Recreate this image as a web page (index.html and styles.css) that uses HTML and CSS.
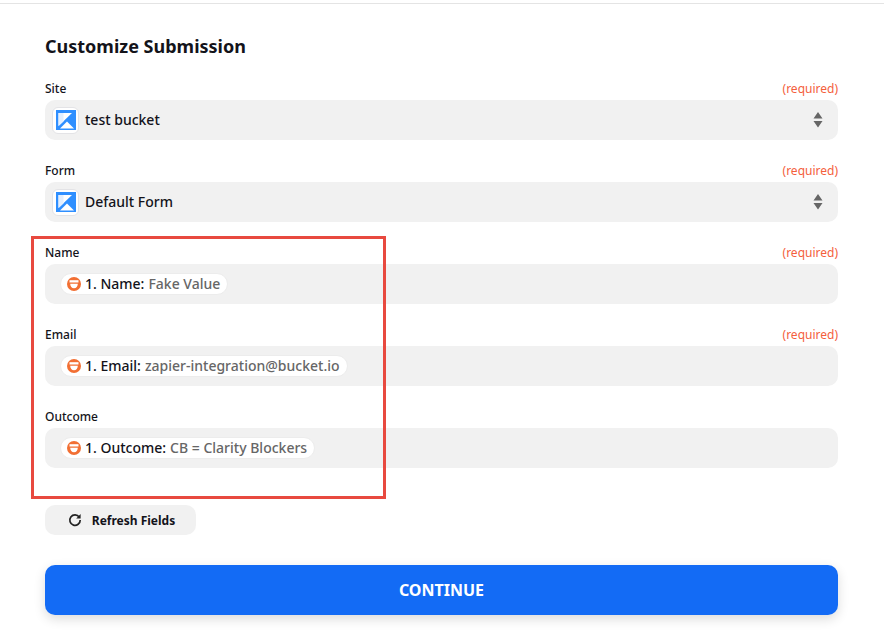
FILE: index.html
```html
<!DOCTYPE html>
<html lang="en">
<head>
<meta charset="utf-8">
<title>Customize Submission</title>
<link rel="stylesheet" href="styles.css">
</head>
<body>
<svg class="defs" width="0" height="0" aria-hidden="true">
  <symbol id="k" viewBox="0 0 20 20">
    <rect width="20" height="20" fill="#2f8fff"/>
    <path d="M2.500 3h13.500L2.500 16z" fill="#fff"/>
    <path d="M2.500 3h5v8.500L2.500 16z" fill="#e3efff"/>
    <path d="M4 18.500l7-7 7 7z" fill="#fff"/>
  </symbol>
  <symbol id="b" viewBox="0 0 14 14">
    <circle cx="7" cy="7" r="7" fill="#f26f33"/>
    <path d="M2.500 3.200h9v2.300h-9z" fill="#fff"/>
    <path d="M3.200 6.700h7.600c0 2.600-1.500 4.500-3.800 4.500S3.200 9.300 3.200 6.700z" fill="#fff"/>
  </symbol>
</svg>
<div class="page">
  <main class="form">
    <h1 class="title">Customize Submission</h1>

    <section class="field">
      <div class="label-row"><label class="label">Site</label><span class="req">(required)</span></div>
      <div class="box select">
        <span class="app"><svg width="20" height="20"><use href="#k"/></svg></span>
        <span class="value">test bucket</span>
        <svg class="updown" width="10" height="18" viewBox="0 0 10 18"><path d="M5 1l4.500 6.500H.5z M.5 10h9L5 16.500z" fill="#666"/></svg>
      </div>
    </section>

    <section class="field">
      <div class="label-row"><label class="label">Form</label><span class="req">(required)</span></div>
      <div class="box select">
        <span class="app"><svg width="20" height="20"><use href="#k"/></svg></span>
        <span class="value">Default Form</span>
        <svg class="updown" width="10" height="18" viewBox="0 0 10 18"><path d="M5 1l4.500 6.500H.5z M.5 10h9L5 16.500z" fill="#666"/></svg>
      </div>
    </section>

    <section class="field">
      <div class="label-row"><label class="label">Name</label><span class="req">(required)</span></div>
      <div class="box mapped">
        <span class="pill"><svg width="14" height="14"><use href="#b"/></svg><span class="key">1. Name:</span><span class="sample">Fake Value</span></span>
      </div>
    </section>

    <section class="field">
      <div class="label-row"><label class="label">Email</label><span class="req">(required)</span></div>
      <div class="box mapped">
        <span class="pill"><svg width="14" height="14"><use href="#b"/></svg><span class="key">1. Email:</span><span class="sample">zapier-integration@bucket.io</span></span>
      </div>
    </section>

    <section class="field">
      <div class="label-row"><label class="label">Outcome</label></div>
      <div class="box mapped">
        <span class="pill"><svg width="14" height="14"><use href="#b"/></svg><span class="key">1. Outcome:</span><span class="sample">CB = Clarity Blockers</span></span>
      </div>
    </section>

    <button class="refresh" type="button">
      <svg width="14" height="14" viewBox="0 0 14 14" fill="none"><path d="M11.300 4.200A5.200 5.200 0 1 0 12.200 7" stroke="#222" stroke-width="1.700"/><path d="M12.600 1v4.400H8.200z" fill="#222"/></svg>
      <span>Refresh Fields</span>
    </button>

    <button class="continue" type="button">CONTINUE</button>
  </main>
  <div class="highlight"></div>
</div>
</body>
</html>
```
FILE: styles.css
```css
* { box-sizing: border-box; }
html, body { margin: 0; height: 100%; }
body { background: #fff; font-family: "Noto Sans", "Open Sans", sans-serif; color: #13131a; overflow: hidden; }
.defs { position: absolute; }
.page { position: relative; width: 884px; height: 642px; border-top: 1px solid #e4e4e4; margin-top: 3px; }
.form { width: 793px; margin-left: 45px; display: flex; flex-direction: column; }
.title { margin: 30px 0 22px; font-size: 18px; line-height: 24px; font-weight: 700; color: #13131a; }
.field { height: 82px; }
.label-row { display: flex; justify-content: space-between; align-items: center; height: 18px; margin-bottom: 2px; }
.label { font-size: 12px; line-height: 18px; font-weight: 500; color: #13131a; }
.req { font-size: 12px; line-height: 18px; color: #f4603c; }
.box { height: 40px; background: #f1f1f1; border-radius: 10px; display: flex; align-items: center; }
.select { padding: 0 10px 0 7px; }
.app { width: 27px; height: 27px; background: #fff; border: 1px solid #e3e3e6; border-radius: 6px; display: flex; align-items: center; justify-content: center; flex: none; }
.app svg { width: 20px; height: 20px; display: block; }
.value { margin-left: 6px; padding-bottom: 2px; font-size: 14px; font-weight: 500; flex: 1; }
.updown { margin-right: 5px; }
.mapped { padding: 0 0 1px 15px; }
.pill { height: 22px; background: #fff; border-radius: 11px; border: 1px solid #ececec; padding: 0 7px 0 6px; display: inline-flex; align-items: center; font-size: 14px; font-weight: 500; white-space: nowrap; }
.pill svg { flex: none; }
.key { margin-left: 4px; }
.sample { margin-left: 4px; color: #666; }
.refresh { align-self: flex-start; width: 151px; height: 30px; margin-top: 15px; padding-left: 8px; border: 0; border-radius: 10px; background: #f1f1f1; display: flex; align-items: center; justify-content: center; gap: 10px; font: 700 12px "Noto Sans", sans-serif; color: #13131a; }
.continue { margin-top: 30px; height: 50px; border: 0; border-radius: 10px; background: #136bf5; color: #fff; font: 700 16px "Noto Sans", sans-serif; box-shadow: 0 4px 12px rgba(0,0,0,.14); }
.highlight { position: absolute; left: 31px; top: 232px; width: 355px; height: 263px; border: 3px solid #e8493f; pointer-events: none; }
```
